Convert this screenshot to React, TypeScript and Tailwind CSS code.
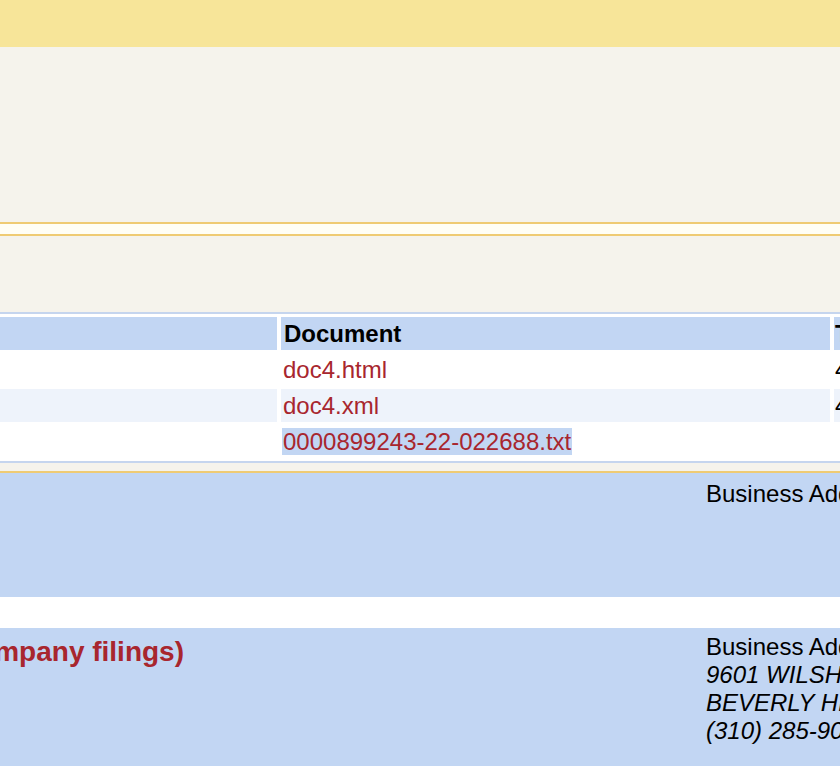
import React from 'react';

const rows = [
  { doc: 'doc4.html', type: '4', shade: false, selected: false },
  { doc: 'doc4.xml', type: '4', shade: true, selected: false },
  { doc: '0000899243-22-022688.txt', type: '', shade: false, selected: true },
];

const App: React.FC = () => {
  return (
    <div className="w-[840px] h-[766px] overflow-hidden bg-white font-['Liberation_Sans',Arial,sans-serif] text-black">
      {/* header band */}
      <div className="h-[47px] bg-[#f7e599]" />
      <div className="h-[175px] bg-[#f5f3ec]" />
      <div className="h-[14px] border-y-2 border-[#efcb73] bg-[#fffef5]" />

      {/* document table */}
      <div className="bg-[#f5f3ec] pt-[76px] pb-[8px] border-b-2 border-[#efcb73]">
        <table className="table-fixed w-[918px] -ml-[20px] border-separate border-spacing-x-[4px] border-spacing-y-[3px] border-y-2 border-[#c5d5ee] bg-white text-[24px] leading-[27px]">
          <colgroup>
            <col className="w-[293px]" />
            <col className="w-[549px]" />
            <col className="w-[60px]" />
          </colgroup>
          <thead>
            <tr>
              <th className="h-[33px] p-0 bg-[#c2d6f3]" />
              <th className="h-[33px] p-0 pl-[3px] bg-[#c2d6f3] text-left font-bold">Document</th>
              <th className="h-[33px] p-0 pl-[1px] bg-[#c2d6f3] text-left font-bold whitespace-nowrap">Type</th>
            </tr>
          </thead>
          <tbody>
            {rows.map((r) => (
              <tr key={r.doc}>
                <td className={`h-[33px] p-0 ${r.shade ? 'bg-[#eef3fb]' : 'bg-white'}`} />
                <td className={`h-[33px] p-0 pl-[1px] whitespace-nowrap ${r.shade ? 'bg-[#eef3fb]' : 'bg-white'}`}>
                  <a
                    href="#"
                    className={`text-[#a8262e] px-[1px] ${r.selected ? 'bg-[#c2d6f3]' : ''}`}
                  >
                    {r.doc}
                  </a>
                </td>
                <td className={`h-[33px] p-0 pl-[1px] ${r.shade ? 'bg-[#eef3fb]' : 'bg-white'}`}>{r.type}</td>
              </tr>
            ))}
          </tbody>
        </table>
      </div>

      {/* reporting owner */}
      <div className="h-[124px] bg-[#c2d6f3] flex text-[24px] leading-[28px]">
        <div className="w-[706px] shrink-0" />
        <div className="pt-[7px] whitespace-nowrap">Business Address</div>
      </div>

      <div className="h-[31px] bg-white" />

      {/* issuer */}
      <div className="h-[200px] bg-[#c2d6f3] flex text-[24px] leading-[28px]">
        <div className="w-[706px] shrink-0">
          <div className="w-[184px] pt-[8px] overflow-hidden flex justify-end whitespace-nowrap text-[28px] leading-[32px] font-bold text-[#a8262e]">
            (see all company filings)
          </div>
        </div>
        <div className="pt-[5px] whitespace-nowrap">
          <div>Business Address</div>
          <div className="italic">9601 WILSHIRE BLVD</div>
          <div className="italic">BEVERLY HILLS CA 90210</div>
          <div className="italic">(310) 285-9000</div>
        </div>
      </div>
    </div>
  );
};

export default App;
